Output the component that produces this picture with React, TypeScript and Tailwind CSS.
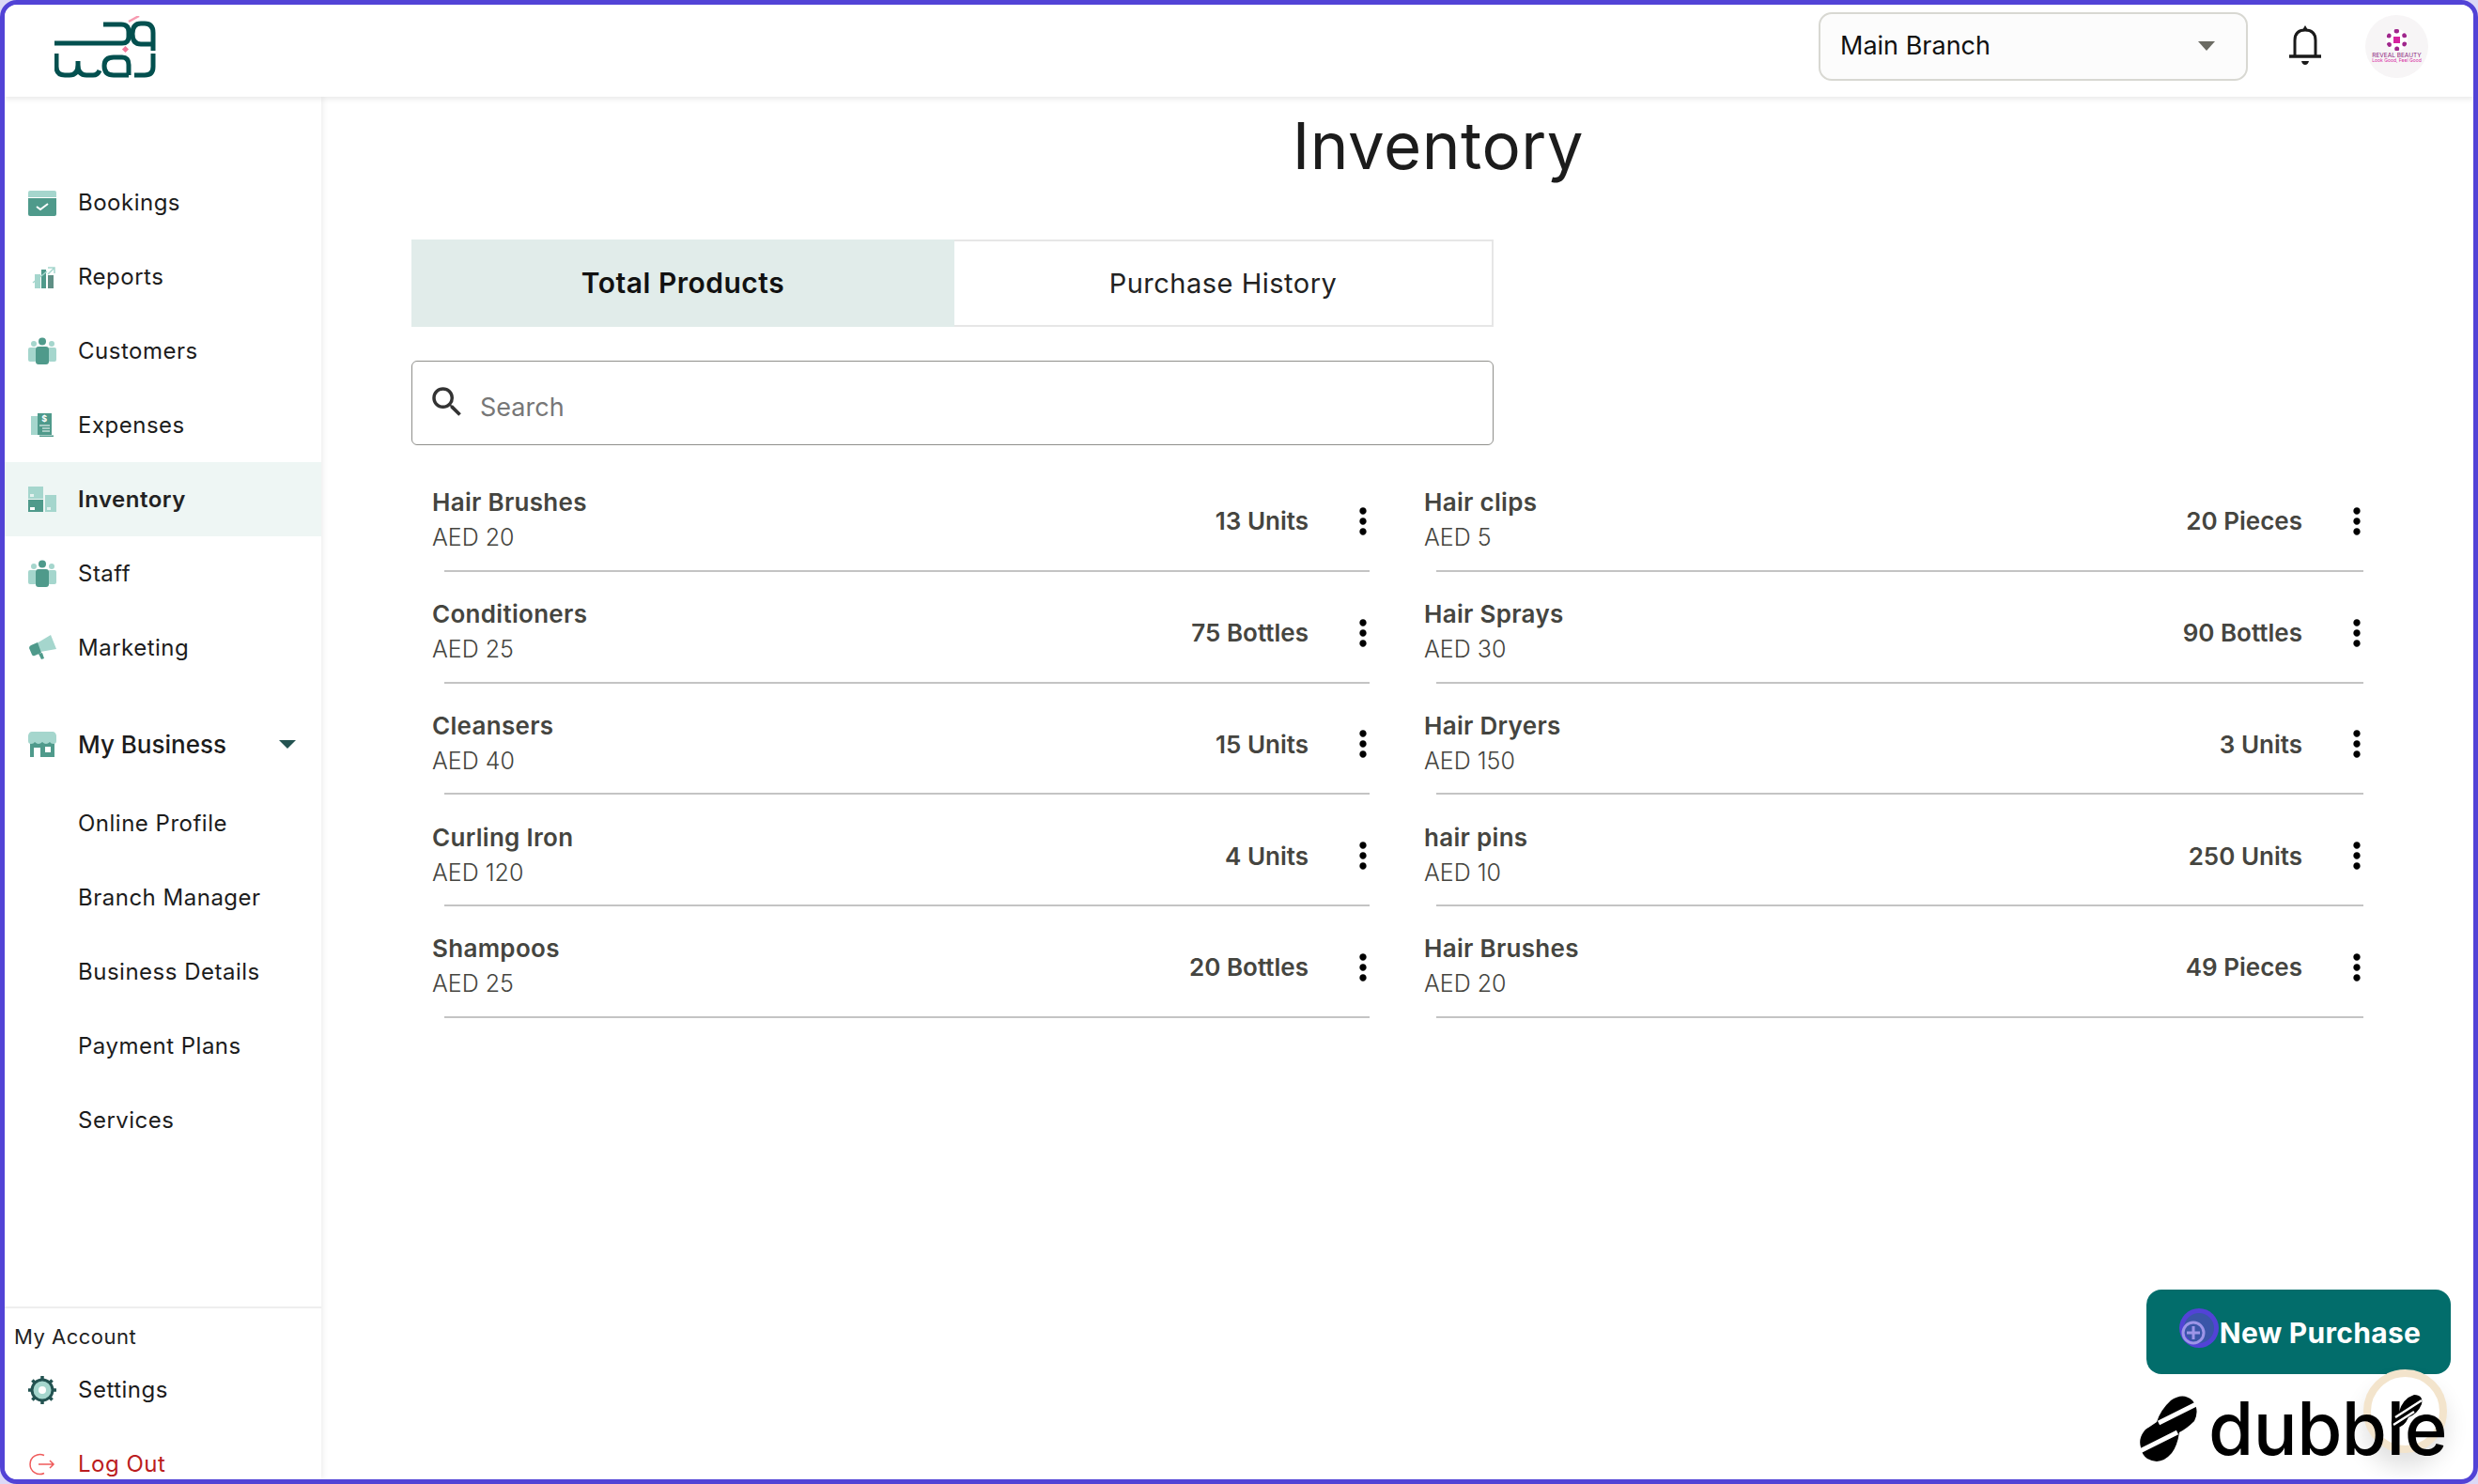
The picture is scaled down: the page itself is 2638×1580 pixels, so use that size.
import type { ReactNode } from "react";
import { MdMoreVert, MdSearch } from "react-icons/md";

const DARK = "#4f9a8b";
const LIGHT = "#a5d6cd";

function IconBox({ children }: { children: ReactNode }) {
  return (
    <svg viewBox="0 0 30 30" className="h-[30px] w-[30px] shrink-0">
      {children}
    </svg>
  );
}

const BookingsIcon = () => (
  <IconBox>
    <path d="M0 9V4q0-2 2-2h26q2 0 2 2v5z" fill={LIGHT} />
    <path d="M0 10h30v17q0 2-2 2H2q-2 0-2-2z" fill={DARK} />
    <path d="M9 19l4 3 8-6" stroke="#fff" strokeWidth="2" fill="none" />
  </IconBox>
);

const ReportsIcon = () => (
  <IconBox>
    <rect x="7" y="12" width="6" height="15" fill={LIGHT} />
    <rect x="14" y="7" width="5" height="20" fill={DARK} />
    <rect x="21" y="13" width="6" height="14" fill="#5f8f85" />
    <path d="M5 21L20 9M21 5h7v6M28 5l-7 7" stroke={LIGHT} strokeWidth="1.5" fill="none" />
  </IconBox>
);

const PeopleIcon = () => (
  <IconBox>
    <circle cx="6" cy="7" r="3" fill={LIGHT} />
    <circle cx="25" cy="7" r="3" fill={LIGHT} />
    <rect x="0" y="11" width="9" height="15" rx="2" fill={LIGHT} />
    <rect x="21" y="11" width="9" height="15" rx="2" fill={LIGHT} />
    <circle cx="15" cy="4.5" r="4" fill={DARK} />
    <rect x="8" y="10" width="14" height="19" rx="3" fill={DARK} />
  </IconBox>
);

const ExpensesIcon = () => (
  <IconBox>
    <rect x="3" y="5" width="7" height="20" fill={LIGHT} />
    <rect x="10" y="2" width="15" height="23" fill={DARK} />
    <text x="17.5" y="11" fontSize="9" fontWeight="700" textAnchor="middle" fill="#fff" fontFamily="Inter, sans-serif">
      $
    </text>
    <path d="M12 15h11M15 18h8M15 21h8" stroke="#fff" strokeWidth="1" />
    <path d="M12 27h15v-1.500H12z" fill={DARK} />
  </IconBox>
);

const InventoryIcon = () => (
  <IconBox>
    <rect x="0" y="1" width="16" height="13" fill={LIGHT} />
    <rect x="0" y="15" width="16" height="13" fill={DARK} />
    <rect x="18" y="10" width="12" height="18" fill={LIGHT} />
    <rect x="2" y="23" width="5" height="3" fill="#fff" />
    <rect x="2" y="9" width="4" height="3" fill="#e4f2ef" />
    <rect x="20" y="23" width="4" height="3" fill="#e4f2ef" />
  </IconBox>
);

const MarketingIcon = () => (
  <IconBox>
    <path d="M9 10L24 1l6 15-17 3z" fill={LIGHT} />
    <path d="M1 15q0-2 2-3l7-3 4 11-7 3q-2 1-3-1z" fill={DARK} />
    <path d="M11 21l4-1 2 6-3 1z" fill={DARK} />
  </IconBox>
);

const BusinessIcon = () => (
  <IconBox>
    <rect x="2" y="12" width="26" height="16" fill={DARK} />
    <rect x="6" y="18" width="7" height="10" fill="#fff" />
    <rect x="18" y="17" width="6" height="6" fill="#fff" />
    <path d="M4 1h22q3 0 4 4v6q0 3-3 3-3 0-4-2-2 2-4 2t-4-2q-2 2-4 2t-4-2q-1 2-4 2-3 0-3-3V5q1-4 4-4z" fill={LIGHT} />
  </IconBox>
);

const SettingsIcon = () => (
  <IconBox>
    <circle cx="15" cy="15" r="11" fill={LIGHT} stroke="#235351" strokeWidth="3" />
    <path
      d="M15 0v4M15 26v4M0 15h4M26 15h4M4.400 4.400l3 3M22.600 22.600l3 3M25.600 4.400l-3 3M7.400 22.600l-3 3"
      stroke="#235351"
      strokeWidth="3.500"
    />
    <circle cx="15" cy="15" r="4" fill="#fff" />
  </IconBox>
);

const LogoutIcon = () => (
  <IconBox>
    <path d="M17 5.500A10.500 10.500 0 1 0 17 24.500" stroke="#ef5b5b" strokeWidth="1.500" fill="none" />
    <path d="M11 15h16M23 11l4 4-4 4" stroke="#ef5b5b" strokeWidth="1.500" fill="none" />
  </IconBox>
);

const BellIcon = () => (
  <svg viewBox="0 0 34 46" className="h-[46px] w-[34px]" fill="none">
    <path d="M17 1l3 5h-6z" fill="#1a1a1a" />
    <path d="M6 34V17Q6 6 17 6t11 11v17" stroke="#1a1a1a" strokeWidth="3" />
    <path d="M0 34h34" stroke="#1a1a1a" strokeWidth="3.500" />
    <path d="M13 39h8q-1 4-4 4t-4-4z" fill="#1a1a1a" />
  </svg>
);

const Logo = () => (
  <svg viewBox="0 0 120 72" className="mt-[8px] h-[72px] w-[120px]" fill="none" stroke="#03504f" strokeWidth="5">
    <path d="M0 29H72Q79 29 79 22V17Q79 9 71 9H52" />
    <path d="M105 37V18Q105 8 96 8H92Q83 8 83 19Q83 30 92 30H105" />
    <path d="M2 40V54Q2 63 11 63H16Q25 63 25 52V48V52Q25 63 34 63H41Q46 63 48 58" />
    <path d="M79 63H63Q53 63 53 53Q53 44 63 44H72Q79 44 79 52V63" />
    <path d="M85 63H96Q105 63 105 54V40" />
    <path d="M79 6L90 0" stroke="#f79ab0" strokeWidth="2.500" />
    <rect x="73" y="33" width="5" height="5" transform="rotate(45 75.500 35.500)" fill="#f4789a" stroke="none" />
  </svg>
);

const mainNav = [
  { label: "Bookings", icon: <BookingsIcon /> },
  { label: "Reports", icon: <ReportsIcon /> },
  { label: "Customers", icon: <PeopleIcon /> },
  { label: "Expenses", icon: <ExpensesIcon /> },
  { label: "Inventory", icon: <InventoryIcon />, active: true },
  { label: "Staff", icon: <PeopleIcon /> },
  { label: "Marketing", icon: <MarketingIcon /> },
];

const businessNav = ["Online Profile", "Branch Manager", "Business Details", "Payment Plans", "Services"];

const products = [
  ["Hair Brushes", "AED 20", "13 Units"],
  ["Hair clips", "AED 5", "20 Pieces"],
  ["Conditioners", "AED 25", "75 Bottles"],
  ["Hair Sprays", "AED 30", "90 Bottles"],
  ["Cleansers", "AED 40", "15 Units"],
  ["Hair Dryers", "AED 150", "3 Units"],
  ["Curling Iron", "AED 120", "4 Units"],
  ["hair pins", "AED 10", "250 Units"],
  ["Shampoos", "AED 25", "20 Bottles"],
  ["Hair Brushes", "AED 20", "49 Pieces"],
];

function NavItem({ label, icon, active }: { label: string; icon?: ReactNode; active?: boolean }) {
  return (
    <div
      className={`flex h-[79px] items-center pl-[25px] text-[24px] tracking-[0.5px] ${
        active ? "bg-[#eef6f4] font-semibold text-[#222]" : "text-[#1c1c1c]"
      }`}
    >
      <span className="flex w-[53px] shrink-0">{icon}</span>
      {label}
    </div>
  );
}

function ProductRow({ name, price, qty }: { name: string; price: string; qty: string }) {
  return (
    <div className="flex h-[118.75px] flex-col pl-[22px] pr-[36px]">
      <div className="flex flex-1 items-center pt-[13px] text-[#454540]">
        <div className="flex-1">
          <div className="text-[26px] leading-[36px] font-semibold tracking-[0.3px]">{name}</div>
          <div className="text-[25px] leading-[39px] font-light">{price}</div>
        </div>
        <div className="text-[26px] font-semibold">{qty}</div>
        <MdMoreVert className="ml-[36px] mr-[-15px] h-[44px] w-[44px] text-black" />
      </div>
      <div className="ml-[13px] h-[2px] bg-[#c4c4c4]" />
    </div>
  );
}

export default function App() {
  return (
    <div className="h-[1580px] w-[2638px] overflow-hidden bg-[#dcd9f6] font-['Inter',sans-serif]">
      <div className="relative flex h-full flex-col overflow-hidden rounded-[18px] border-[5px] border-[#5243d6] bg-white">
        <header className="z-10 flex h-[98px] shrink-0 items-center bg-white pb-[10px] pl-[53px] pr-[48px] shadow-[0_2px_6px_rgba(0,0,0,0.1)]">
          <Logo />
          <div className="ml-auto flex h-[73px] w-[457px] items-center justify-between rounded-[14px] border-2 border-[#d8d8d2] bg-[#fcfcfc] pl-[21px] pr-[33px] text-[27px] text-[#111]">
            Main Branch
            <span className="h-0 w-0 border-x-[9px] border-t-[10px] border-x-transparent border-t-[#6b6b63]" />
          </div>
          <span className="ml-[44px] flex">
            <BellIcon />
          </span>
          <div className="ml-[47px] flex h-[67px] w-[67px] flex-col items-center justify-center rounded-full bg-[#f7f5f6] text-center leading-none">
            <span className="flex h-[23px] w-[23px] items-center justify-center rounded-full border-[5px] border-dotted border-[#a0268c] bg-white">
              <span className="h-[7px] w-[7px] bg-[#d6249f]" />
            </span>
            <span className="mt-[2px] text-[6.500px] whitespace-nowrap text-[#8a1a7a]">REVEAL BEAUTY</span>
            <span className="text-[5px] whitespace-nowrap text-[#d6249f]">Look Good, Feel Good</span>
          </div>
        </header>

        <div className="flex min-h-0 flex-1">
          <aside className="flex w-[337px] shrink-0 flex-col bg-white pt-[73px] shadow-[2px_0_6px_rgba(0,0,0,0.07)]">
            {mainNav.map((item) => (
              <NavItem key={item.label} {...item} />
            ))}
            <div className="mt-[24px] flex h-[79px] items-center pl-[25px] pr-[27px] text-[26px] font-medium text-[#1c1c1c]">
              <span className="flex w-[53px] shrink-0">
                <BusinessIcon />
              </span>
              My Business
              <span className="ml-auto h-0 w-0 border-x-[9px] border-t-[9px] border-x-transparent border-t-[#235351]" />
            </div>
            <div className="mt-[5px]">
              {businessNav.map((label) => (
                <NavItem key={label} label={label} />
              ))}
            </div>
            <div className="mb-[-23px] mt-auto border-t-2 border-[#eeeeee] pt-[14px]">
              <div className="pl-[10px] text-[22px] leading-[32px] tracking-[0.5px] text-[#222]">My Account</div>
              <div className="mt-[1px]">
                <NavItem label="Settings" icon={<SettingsIcon />} />
              </div>
              <div className="flex h-[79px] items-center pl-[25px] text-[24px] tracking-[0.5px] text-[#bb1c20]">
                <span className="flex w-[53px] shrink-0">
                  <LogoutIcon />
                </span>
                Log Out
              </div>
            </div>
          </aside>

          <main className="min-w-0 flex-1 pl-[96px]">
            <h1 className="mt-[7px] w-[2186px] text-center text-[69px] leading-[90px] font-normal tracking-[0.5px] text-[#1c1c1c]">
              Inventory
            </h1>
            <div className="mt-[55px] flex h-[93px] w-[1152px] border-2 border-[#e6e6e6] text-[29px] tracking-[0.5px]">
              <div className="my-[-2px] ml-[-2px] flex w-[578px] items-center justify-center bg-[#e1ecea] text-[30px] font-semibold text-[#111]">
                Total Products
              </div>
              <div className="flex flex-1 items-center justify-center text-[#222]">Purchase History</div>
            </div>
            <div className="mt-[36px] flex h-[90px] w-[1152px] items-center rounded-[6px] border border-[#8f8f8b] pl-[18px]">
              <MdSearch className="mt-[-2px] ml-[-2px] h-[42px] w-[42px] text-[#333]" />
              <input
                placeholder="Search"
                className="ml-[14px] mt-[10px] flex-1 bg-transparent text-[27px] outline-none placeholder:text-[#777]"
              />
            </div>
            <div className="mt-[16px] grid w-[2114px] grid-cols-[1056px_1058px]">
              {products.map(([name, price, qty], i) => (
                <ProductRow key={i} name={name} price={price} qty={qty} />
              ))}
            </div>
          </main>
        </div>

        <div className="absolute left-[2280px] top-[1368px] flex h-[90px] w-[324px] items-center justify-center rounded-[16px] bg-[#026d6b] pl-[46px] pt-[2px] text-[30px] font-bold tracking-[0.3px] text-white">
          New Purchase
        </div>
        <div className="absolute left-[2320px] top-[1393px] h-[32px] w-[32px] rounded-full bg-[#3a55a8] ring-[5px] ring-[#5243d6]">
          <svg viewBox="0 0 32 32" className="h-[32px] w-[32px] overflow-visible" fill="none" stroke="#9d95e8" strokeWidth="3">
            <circle cx="10" cy="21" r="11" />
            <path d="M10 14v14M3 21h14" />
          </svg>
        </div>
        <div className="absolute left-[2511px] top-[1453px] h-[89px] w-[89px] rounded-full border-[8px] border-[#f3e4cc] bg-white shadow-[0_16px_24px_rgba(0,0,0,0.12)]" />
        <div className="absolute left-[2271px] top-[1477px] flex items-center text-black">
          <svg viewBox="0 0 64 72" className="h-[72px] w-[64px]">
            <path
              d="M3 56Q0 46 8 37L20 29Q24 16 35 6Q48-3 58 6Q66 16 60 28Q52 36 44 40Q42 54 36 62Q24 76 10 68Q4 64 3 56z"
              fill="#000"
            />
            <path d="M22 30L62 10M2 60L42 40" stroke="#fff" strokeWidth="5" />
          </svg>
          <span className="ml-[11px] text-[78px] leading-none font-medium tracking-[-0.5px]">dubble</span>
        </div>
        <svg viewBox="0 0 36 40" className="absolute left-[2539px] top-[1478px] h-[40px] w-[36px]">
          <path d="M2 36Q0 26 10 20Q14 6 26 2Q36 2 34 12Q30 22 20 26Q14 40 2 36z" fill="#000" />
          <path d="M6 26L34 8M4 34L26 20" stroke="#fff" strokeWidth="2.500" />
        </svg>
      </div>
    </div>
  );
}
